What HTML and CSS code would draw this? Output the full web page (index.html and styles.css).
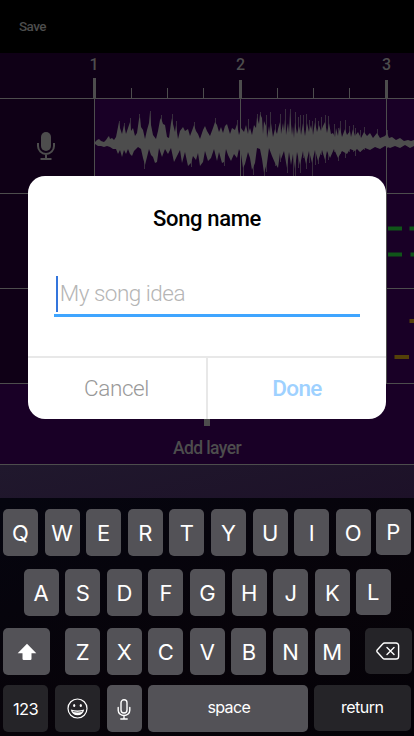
FILE: index.html
```html
<!DOCTYPE html>
<html lang="en">
<head>
<meta charset="utf-8">
<title>Song name</title>
<link rel="stylesheet" href="styles.css">
</head>
<body>
<div class="screen">
  <header class="topbar"><span class="save">Save</span></header>
  <div class="ruler">
    <svg class="ticks" width="414" height="45" viewBox="0 0 414 45">
      <path class="major" d="M93 25h3v20h-3zM239 27h3v18h-3zM385 27h3v18h-3z"/>
      <path class="minor" d="M131 35h1v10h-1zM167 35h1v10h-1zM203 35h1v10h-1zM277 35h1v10h-1zM313 35h1v10h-1zM349 35h1v10h-1z"/>
      <text x="94" y="17">1</text><text x="240.5" y="17">2</text><text x="386.5" y="17">3</text>
    </svg>
  </div>
  <div class="track">
    <div class="track-head">
      <svg class="mic" width="20" height="30" viewBox="0 0 20 30">
        <rect x="5" y="1" width="10" height="19" rx="5" fill="#4d4d4d"/>
        <path d="M2 12v3a8 8 0 0 0 16 0v-3M10 23v5M4.500 28h11" fill="none" stroke="#4d4d4d" stroke-width="2"/>
      </svg>
    </div>
    <div class="lane">
      <svg width="320" height="94" viewBox="94 99 320 94">
        <path class="grid" d="M94 99h1v94h-1zM240 99h1v94h-1zM386 99h1v94h-1z"/>
        <path class="wave-soft" d="M119.500 121V143M124.500 123V143M130.500 118V143M139.500 114V143M144.500 143V169M150.500 111V143M161.500 115V143M172.500 114V143M176.500 121V143M191.500 143V167M194.500 122V143M215.500 118V143M224.500 143V166M237.500 120V143M243.500 143V177M248.500 119V143M253.500 143V175M257.500 114V143M260.500 112V143M264.500 143V178M266.500 115V172M270.500 112V143M275.500 124V166M280.500 114V162M285.500 109V143M287.500 143V173M290.500 109V143M293.500 143V178M295.500 112V180M298.500 117V168M300.500 115V173M303.500 115V158M306.500 114V169M309.500 120V163M312.500 121V177M315.500 118V165M318.500 121V164M321.500 117V155M325.500 115V163M328.500 116V160M334.500 124V152M338.500 128V161M340.500 121V154M345.500 120V158M349.500 126V152M353.500 125V152M355.500 128V156M360.500 130V152M364.500 127V150M377.500 129V148M387.500 130V148"/>
        <path class="wave" d="M95 142L97 140 99 139 101 141 104 142 106 140 108 137 109 136 110 139 112 138 114 140 116 137 118 127 119 122 120 128 122 134 124 125 125 129 126 134 128 128 130 122 131 131 133 128 135 136 137 133 139 119 140 117 141 127 143 130 145 139 147 130 149 123 150 112 151 125 153 135 156 139 158 131 160 120 161 118 163 124 165 125 167 137 169 138 171 123 172 118 173 124 175 132 176 125 178 139 180 131 183 127 185 131 188 129 190 136 193 128 194 125 196 131 198 134 200 139 203 130 205 126 207 131 210 136 213 128 215 122 217 125 219 132 221 127 223 133 225 126 227 124 230 134 232 128 235 130 237 124 239 135 241 128 244 132 246 125 248 134 250 128 252 135 254 125 256 128 257 117 259 124 260 114 262 118 263 134 264 121 266 126 267 138 269 126 270 133 271 123 273 137 275 129 277 134 278 129 280 122 281 134 283 123 284 131 285 119 286 135 288 123 289 133 290 112 291 124 292 135 293 126 294 138 295 122 297 134 299 126 301 135 303 123 305 136 307 123 309 132 311 125 313 135 315 122 317 132 319 125 321 131 323 126 325 122 327 133 329 123 331 134 333 133 335 137 336 128 338 136 340 127 342 137 345 129 347 135 350 131 351 137 353 129 355 136 358 132 361 138 364 132 367 136 370 133 373 138 377 133 380 138 385 136 387 133 389 138 392 137 396 140 400 138 404 141 408 140 411 141 414 140V146L410 148 405 145 400 148 395 146 390 148 385 146 380 149 375 147 370 150 365 148 360 152 357 149 355 151 350 149 347 154 342 151 338 158 334 149 330 158 327 151 325 160 322 150 318 161 315 150 312 163 309 151 306 164 303 151 300 165 297 152 295 169 293 154 291 165 289 152 287 168 284 151 281 159 280 153 278 168 275 163 272 156 269 148 267 163 264 173 262 159 260 149 257 148 255 163 252 170 250 158 248 152 245 164 243 168 241 154 239 149 237 158 234 154 231 161 228 155 226 149 224 162 222 163 219 152 217 161 214 149 211 158 208 161 205 151 203 162 200 166 198 153 196 160 193 156 191 163 188 166 185 152 182 163 180 150 177 156 174 162 171 148 168 154 165 149 162 157 159 148 157 162 155 163 153 157 151 155 149 149 147 157 145 165 143 158 141 149 138 147 136 149 134 151 132 156 130 154 128 149 126 154 124 150 122 157 120 150 118 154 116 149 113 149 110 147 107 146 104 147 101 146 98 146 95 144z"/>
      </svg>
    </div>
  </div>
  <div class="track">
    <div class="track-head"></div>
    <div class="lane">
      <svg width="320" height="94" viewBox="94 194 320 94">
        <path class="grid" d="M94 194h1v94h-1zM240 194h1v94h-1zM386 194h1v94h-1z"/>
        <path class="note-green" d="M388 226.500h14v4h-14zM409.500 226.500h5v4h-5zM388 252.500h14v4h-14zM410.500 252.500h4v4h-4z"/>
      </svg>
    </div>
  </div>
  <div class="track">
    <div class="track-head"></div>
    <div class="lane">
      <svg width="320" height="94" viewBox="94 289 320 94">
        <path class="grid" d="M94 289h1v94h-1zM240 289h1v94h-1zM386 289h1v94h-1z"/>
        <path class="note-gold" d="M409.500 319h5v4h-5zM394.500 355h14.500v4h-14.500z"/>
      </svg>
    </div>
  </div>
  <div class="add-layer">
    <svg width="30" height="30" viewBox="0 0 30 30"><path d="M12 0h6v12h12v6H18v12h-6V18H0v-6h12z" fill="#4d4d4d"/></svg>
    <span class="add-text">Add layer</span>
  </div>
  <div class="footer-band"></div>
  <div class="keyboard">
    <div class="row row-1">
      <b class="key">Q</b><b class="key">W</b><b class="key">E</b><b class="key">R</b><b class="key">T</b><b class="key">Y</b><b class="key">U</b><b class="key">I</b><b class="key">O</b><b class="key last">P</b>
    </div>
    <div class="row row-2">
      <b class="key">A</b><b class="key">S</b><b class="key">D</b><b class="key">F</b><b class="key">G</b><b class="key">H</b><b class="key">J</b><b class="key">K</b><b class="key last">L</b>
    </div>
    <div class="row row-3">
      <b class="key shift"><svg width="20" height="18" viewBox="0 0 20 18"><path d="M10 .8L19.300 10.300H14.500V15.800Q14.500 17 13.300 17H6.700Q5.500 17 5.500 15.800V10.300H.7z" fill="#fff"/></svg></b>
      <b class="key">Z</b><b class="key">X</b><b class="key">C</b><b class="key">V</b><b class="key">B</b><b class="key">N</b><b class="key">M</b>
      <b class="key dark delete"><svg width="24" height="18" viewBox="0 0 24 18" fill="none" stroke="#fff" stroke-width="1.400" stroke-linecap="round" stroke-linejoin="round"><path d="M8.500 1H20a2.600 2.600 0 0 1 2.600 2.600v10.800A2.600 2.600 0 0 1 20 17H8.500Q7.600 17 6.900 16.200L1.200 10Q.5 9 1.200 8L6.900 1.800Q7.600 1 8.500 1zM11 5.500l7 7M18 5.500l-7 7"/></svg></b>
    </div>
    <div class="row row-4">
      <b class="key dark num">123</b>
      <b class="key dark emoji"><svg width="21" height="21" viewBox="0 0 21 21"><circle cx="10.500" cy="10.500" r="9.500" fill="none" stroke="#fff" stroke-width="1.200"/><ellipse cx="7.200" cy="7.500" rx="1.100" ry="1.500" fill="#fff"/><ellipse cx="13.800" cy="7.500" rx="1.100" ry="1.500" fill="#fff"/><path d="M3.800 11.500Q10.500 13.500 17.200 11.500Q16 17.300 10.500 17.300T3.800 11.500z" fill="#fff"/><path d="M5.800 13.500Q10.500 15 15.200 13.500" fill="none" stroke="#252428" stroke-width=".7"/></svg></b>
      <b class="key voice"><svg width="14" height="21" viewBox="0 0 14 21" fill="none" stroke="#fff" stroke-width="1.400" stroke-linecap="round"><rect x="4" y=".8" width="6" height="13.200" rx="3"/><path d="M1.200 8.500v2.700a5.800 5.300 0 0 0 11.600 0V8.500M7 16.500v3.300M3.800 20h6.400"/></svg></b>
      <b class="key space"><span class="space-text">space</span></b>
      <b class="key dark return"><span class="return-text">return</span></b>
    </div>
  </div>
  <div class="dialog">
    <h1 class="title"><span class="title-text">Song name</span></h1>
    <div class="field"><i class="caret"></i><span class="placeholder">My song idea</span></div>
    <div class="actions">
      <div class="action cancel"><span class="cancel-text">Cancel</span></div>
      <div class="action done"><span class="done-text">Done</span></div>
    </div>
  </div>
</div>
</body>
</html>
```
FILE: styles.css
```css
* { box-sizing: border-box; }
body { margin: 0; background: #000; }
svg { display: block; }
.screen {
  position: relative;
  display: flex;
  flex-direction: column;
  width: 414px;
  height: 736px;
  overflow: hidden;
  font-family: Roboto, "Noto Sans", sans-serif;
  color: #4d4d4d;
}
.topbar { height: 53px; padding: 17px 0 0 19px; background: #000; }
.save { display: block; font-size: 13.500px; line-height: 19px; font-weight: 500; letter-spacing: -0.600px; }
.ruler { height: 46px; background: #0f0016; border-bottom: 1px solid #4d4d4d; }
.ticks { fill: #4d4d4d; }
.ticks text { font: 500 16px Roboto, sans-serif; text-anchor: middle; }
.track { display: flex; height: 95px; border-bottom: 1px solid #4d4d4d; background: #190026; }
.track-head { width: 94px; background: #0f0016; padding: 32px 0 0 36px; }
.lane { width: 320px; }
.grid, .wave { fill: #4d4d4d; }
.wave-soft { stroke: #4d4d4d; stroke-width: 1; opacity: .6; }
.note-green { fill: #105519; }
.note-gold { fill: #544008; }
.add-layer {
  display: flex;
  flex-direction: column;
  align-items: center;
  height: 81px;
  padding-top: 12px;
  background: #190026;
  border-bottom: 1px solid #4d4d4d;
}
.add-text { margin-top: 11px; font-size: 17.500px; line-height: 22px; font-weight: 500; letter-spacing: -0.600px; }
.footer-band { height: 33px; background: linear-gradient(165deg, #20182d, #1d1128); }
.keyboard {
  height: 238px;
  padding: 11px 3px 4px;
  background: linear-gradient(160deg, #05050f, #070309 60%, #040207);
  color: #fff;
  font-family: Inter, "Liberation Sans", sans-serif;
}
.row { display: flex; gap: 6.600px; height: 47px; }
.row-2 { margin-top: 12.500px; padding-left: 20.700px; }
.row-3 { margin-top: 12.500px; }
.row-4 { margin-top: 10px; }
.key {
  display: flex;
  flex: none;
  align-items: center;
  justify-content: center;
  width: 35px;
  height: 47px;
  padding-top: 1px;
  border-radius: 5px;
  background: #535257;
  font-size: 22px;
  font-weight: 400;
}
.row .key.last { margin-left: -0.800px; }
.row-1 .key.last { margin-left: -1.500px; }
.key.last, .key.delete { height: 46px; }
.key.last { padding-top: 0; }
.row .dark { background: #252428; }
.shift { width: 47px; padding: 0; margin-right: 8.500px; }
.delete { width: 47px; margin-left: 8.300px; padding: 0; }
.num { width: 45px; padding: 0; font-size: 16.500px; letter-spacing: -0.600px; }
.emoji { width: 45px; padding: 0; }
.voice { padding: 2px 0 0; margin-left: 0.400px; }
.space { width: 160px; padding: 0 0 3px 2px; font-size: 16px; letter-spacing: -0.650px; margin-left: -0.400px; }
.return { width: 97px; height: 46px; padding: 0 0 2px; font-size: 16px; letter-spacing: -0.500px; margin-left: -0.600px; }
.dialog {
  position: absolute;
  left: 28px;
  top: 176px;
  display: flex;
  flex-direction: column;
  width: 358px;
  height: 243px;
  border-radius: 17px;
  background: #fff;
  overflow: hidden;
}
.title { margin: 29px 0 0; height: 28px; text-align: center; font-size: 22px; line-height: 28px; font-weight: 500; letter-spacing: -0.350px; color: #000; }
.field { display: flex; margin: 42px 26px 0; height: 42px; border-bottom: 3px solid #3fa5ff; }
.caret { width: 2px; height: 36px; margin: 1px 2.300px 0 1.500px; background: #3475dc; }
.placeholder { font-size: 22.500px; line-height: 36px; font-weight: 300; letter-spacing: -0.500px; color: #b5b5b5; }
.actions { display: flex; height: 64px; margin-top: 39px; border-top: 2px solid #e8e8e8; }
.action { flex: none; text-align: center; font-size: 22.500px; line-height: 60px; letter-spacing: -0.400px; }
.cancel { width: 180px; padding-right: 1px; border-right: 2px solid #e8e8e8; color: #999; font-weight: 300; }
.done { width: 178px; color: #9ed1ff; font-weight: 500; letter-spacing: -0.600px; }
```
